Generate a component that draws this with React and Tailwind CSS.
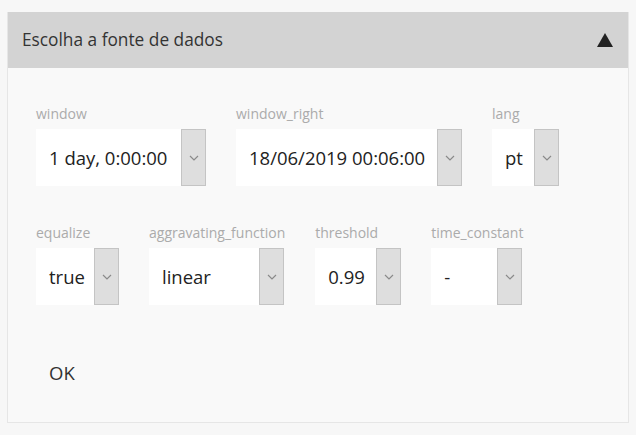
import React from "react";

const font = { fontFamily: '"Open Sans", "Noto Sans", sans-serif' };

function Chevron() {
  return (
    <svg width="10" height="6" viewBox="0 0 10 6" fill="none">
      <polyline points="1,1 5,5 9,1" stroke="#8a8a8a" strokeWidth="1.2" fill="none" />
    </svg>
  );
}

function Field({ label, value, w }) {
  return (
    <div className="flex flex-col">
      <div className="text-[14px] leading-[18px] mb-[6px] text-[#ababab] whitespace-nowrap">{label}</div>
      <div className="flex h-[57px]">
        <div className={`${w} bg-white flex items-center pl-[13px] text-[18.5px] text-[#222] whitespace-nowrap`}>
          {value}
        </div>
        <div className="w-[25px] bg-[#dedede] border border-[#c4c4c4] flex items-center justify-center">
          <Chevron />
        </div>
      </div>
    </div>
  );
}

export default function App() {
  return (
    <div className="w-[636px] h-[435px] bg-[#f7f7f7] pt-[12px] pl-[7px]" style={font}>
      <div className="w-[622px] border border-[#e6e6e6] border-t-0 bg-[#f9f9f9]">
        <div className="h-[56px] bg-[#d3d3d3] flex items-center justify-between pl-[14px] pr-[15px]">
          <span className="text-[17.3px] text-[#333]">Escolha a fonte de dados</span>
          <svg width="16" height="14" viewBox="0 0 16 14">
            <polygon points="8,0 16,14 0,14" fill="#222" />
          </svg>
        </div>
        <div className="pl-[28px] pt-[37px] pb-[21px]">
          <div className="flex gap-[30px]">
            <Field label="window" value="1 day, 0:00:00" w="w-[145px]" />
            <Field label="window_right" value="18/06/2019 00:06:00" w="w-[201px]" />
            <Field label="lang" value="pt" w="w-[42px]" />
          </div>
          <div className="flex gap-[30px] mt-[38px]">
            <Field label="equalize" value="true" w="w-[58px]" />
            <Field label="aggravating_function" value="linear" w="w-[110px]" />
            <Field label="threshold" value="0.99" w="w-[61px]" />
            <Field label="time_constant" value="-" w="w-[66px]" />
          </div>
          <div className="mt-[39px] h-[57px] flex items-center pl-[13px] text-[18.5px] text-[#333]">OK</div>
        </div>
      </div>
    </div>
  );
}
